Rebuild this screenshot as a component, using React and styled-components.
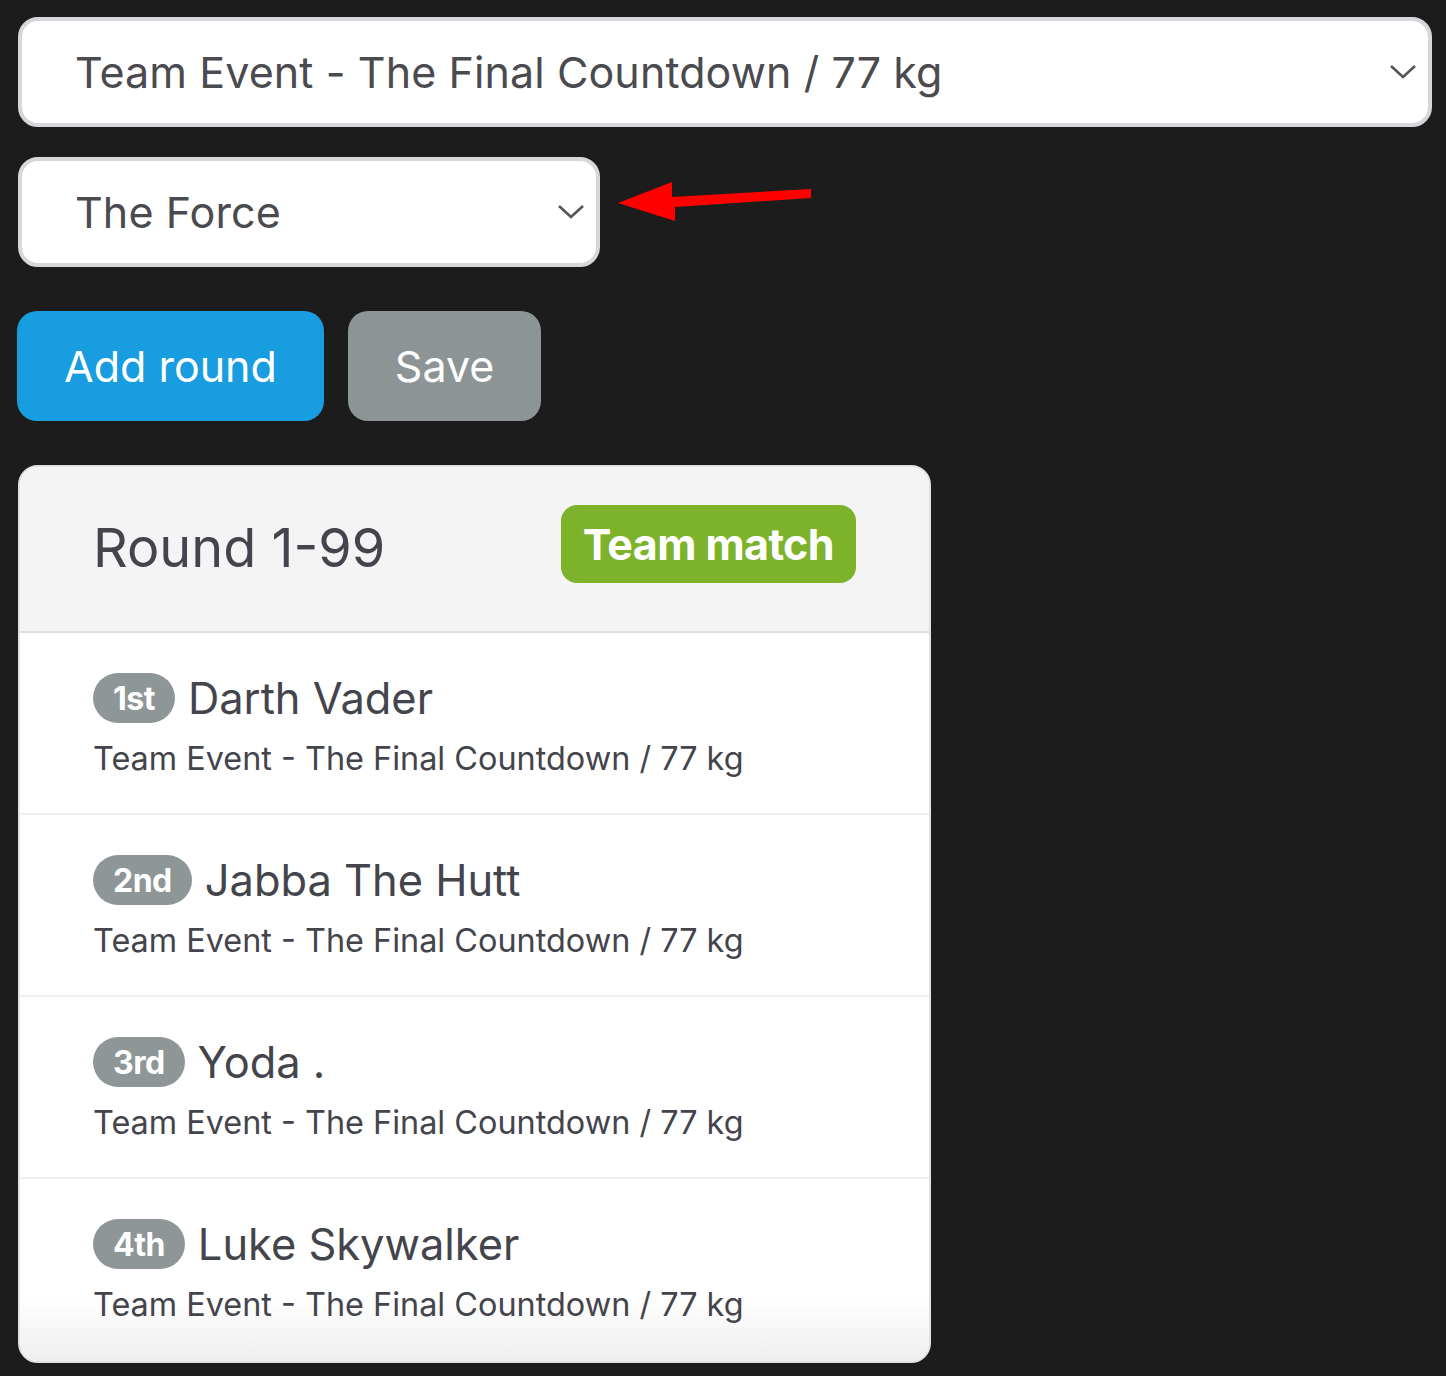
import React from "react";
import styled, { createGlobalStyle } from "styled-components";

const GlobalStyle = createGlobalStyle`
  html, body {
    margin: 0;
    padding: 0;
    background: #1c1c1c;
  }
  body {
    font-family: Inter, "Noto Sans", sans-serif;
  }
`;

const Page = styled.div`
  padding: 17px 14px 16px 18px;
  display: flex;
  flex-direction: column;
  gap: 30px;
  min-height: 1376px;
  box-sizing: border-box;
`;

const SelectRow = styled.div`
  display: flex;
  align-items: center;
  gap: 18px;
`;

const Select = styled.div`
  width: ${(p) => p.width};
  height: 110px;
  box-sizing: border-box;
  background: #fff;
  border: 4px solid #d6d7db;
  border-radius: 20px;
  display: flex;
  align-items: center;
  justify-content: space-between;
  padding: 0 10px 0 53px;
  font-size: 43px;
  color: #4a4a4f;
  letter-spacing: 0.1px;
`;

const Chevron = () => (
  <svg width="30" height="18" viewBox="0 0 30 18">
    <path d="M3 3 L15 14 L27 3" fill="none" stroke="#555" strokeWidth="2.6" />
  </svg>
);

const Arrow = () => (
  <svg width="200" height="60" viewBox="0 0 200 60">
    <polygon points="0,21 54,0 54,15 193,7 193,16 57,25 57,39" fill="#ff0000" />
  </svg>
);

const ButtonRow = styled.div`
  display: flex;
  gap: 24px;
  margin-top: 14px;
  margin-left: -1px;
`;

const Button = styled.button`
  height: 110px;
  padding: 0 ${(p) => p.pad}px;
  border: none;
  border-radius: 20px;
  background: ${(p) => p.bg};
  color: #fff;
  font-family: Inter, "Noto Sans", sans-serif;
  font-size: 43px;
`;

const Card = styled.div`
  width: 913px;
  margin-top: 14px;
  background: #fff;
  border: 2px solid #e2e2e2;
  border-radius: 20px;
  overflow: hidden;
  box-sizing: border-box;
`;

const CardHeader = styled.div`
  height: 166px;
  box-sizing: border-box;
  background: #f4f4f4;
  border-bottom: 2px solid #dedede;
  display: flex;
  align-items: flex-start;
  justify-content: space-between;
  padding: 38px 73px 0 73px;
`;

const Title = styled.div`
  font-size: 54px;
  color: #44444c;
  margin-top: 10px;
`;

const Pill = styled.span`
  background: ${(p) => p.bg};
  color: #fff;
  font-weight: 700;
  display: inline-flex;
  align-items: center;
  justify-content: center;
  white-space: nowrap;
`;

const MatchPill = styled(Pill)`
  height: 78px;
  padding: 0 22px;
  border-radius: 16px;
  font-size: 43px;
  letter-spacing: -0.6px;
`;

const Item = styled.div`
  height: 182px;
  box-sizing: border-box;
  border-bottom: ${(p) => (p.last ? "none" : "2px solid #efefef")};
  padding: 39px 20px 0 73px;
  background: ${(p) => (p.last ? "linear-gradient(#fff 65%, #eeeeee)" : "transparent")};
`;

const NameLine = styled.div`
  display: flex;
  align-items: center;
  gap: 13px;
  font-size: 43.4px;
  color: #44444c;
`;

const RankPill = styled(Pill)`
  height: 50px;
  padding: 0 20px;
  border-radius: 25px;
  font-size: 32px;
  letter-spacing: -0.5px;
`;

const Sub = styled.div`
  margin-top: 15px;
  font-size: 32.4px;
  color: #44444c;
`;

const players = [
  { rank: "1st", name: "Darth Vader" },
  { rank: "2nd", name: "Jabba The Hutt" },
  { rank: "3rd", name: "Yoda ." },
  { rank: "4th", name: "Luke Skywalker" },
];

const eventName = "Team Event - The Final Countdown / 77 kg";

export default function App() {
  return (
    <>
      <GlobalStyle />
      <Page>
        <Select width="1414px">
          <span>{eventName}</span>
          <Chevron />
        </Select>
        <SelectRow>
          <Select width="582px">
            <span>The Force</span>
            <Chevron />
          </Select>
          <Arrow />
        </SelectRow>
        <ButtonRow>
          <Button bg="#189de0" pad={47}>Add round</Button>
          <Button bg="#8c9496" pad={47}>Save</Button>
        </ButtonRow>
        <Card>
          <CardHeader>
            <Title>Round 1-99</Title>
            <MatchPill bg="#7cb32b">Team match</MatchPill>
          </CardHeader>
          {players.map((p, i) => (
            <Item key={p.rank} last={i === players.length - 1}>
              <NameLine>
                <RankPill bg="#8e9697">{p.rank}</RankPill>
                <span>{p.name}</span>
              </NameLine>
              <Sub>{eventName}</Sub>
            </Item>
          ))}
        </Card>
      </Page>
    </>
  );
}
